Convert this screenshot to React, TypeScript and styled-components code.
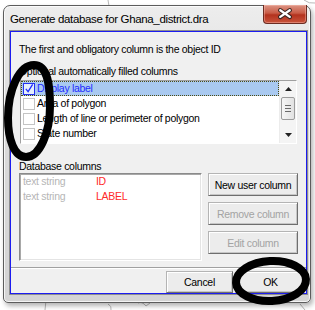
import styled, { createGlobalStyle } from 'styled-components'

const GlobalStyle = createGlobalStyle`
	html, body {
		margin: 0;
		padding: 0;
	}
	body {
		width: 315px;
		height: 310px;
		overflow: hidden;
		background: #fff;
		font-family: 'Liberation Sans', Arial, sans-serif;
		font-size: 10.5px;
		letter-spacing: -0.3px;
		color: #000;
	}
`

const autoColumns = [
	{ label: 'Display label', checked: true },
	{ label: 'Area of polygon', checked: false },
	{ label: 'Length of line or perimeter of polygon', checked: false },
	{ label: 'State number', checked: false },
	{ label: 'Start point', checked: false },
]

const dbColumns = [
	{ type: 'text string', name: 'ID' },
	{ type: 'text string', name: 'LABEL' },
]

export default function App() {
	return (
		<Page>
			<GlobalStyle />
			<MapLines width='315' height='310' viewBox='0 0 315 310'>
				<path d='M108 0 L109 6' />
				<path d='M304 0 Q309 4 315 3' />
				<path d='M46 300 L45 310' />
				<path d='M108 304 Q112 306 111 310' />
				<path d='M138 303 Q142 301 146 306 L150 303' />
				<path d='M300 304 L305 310' />
			</MapLines>
			<Window>
				<TitleBar>
					<Title>Generate database for Ghana_district.dra</Title>
					<CloseButton>
						<svg width='44' height='19' viewBox='0 0 44 19'>
							<path
								d='M17 5 L27 12 M27 5 L17 12'
								stroke='#3b2622'
								strokeWidth='4.6'
								strokeLinecap='round'
							/>
							<path
								d='M17 5 L27 12 M27 5 L17 12'
								stroke='#fff'
								strokeWidth='2.4'
								strokeLinecap='round'
							/>
						</svg>
					</CloseButton>
				</TitleBar>
				<ClientFrame>
					<Client>
						<Intro>The first and obligatory column is the object ID</Intro>
						<SectionLabel>Optional automatically filled columns</SectionLabel>
						<CheckList>
							<CheckRows>
								{autoColumns.map((c, i) => (
									<CheckRow key={c.label} $selected={i === 0}>
										<Box $checked={c.checked}>
											{c.checked && (
												<svg width='11' height='11' viewBox='0 0 11 11'>
													<path
														d='M2 6 L4.5 9 L9.5 1'
														stroke='#1e2cff'
														strokeWidth='1.4'
														fill='none'
													/>
												</svg>
											)}
										</Box>
										<RowText $selected={i === 0}>{c.label}</RowText>
									</CheckRow>
								))}
							</CheckRows>
							<ScrollBar>
								<ScrollArrow>
									<svg width='7' height='4' viewBox='0 0 7 4'>
										<path d='M0 4 L3.5 0 L7 4 Z' fill='#222' />
									</svg>
								</ScrollArrow>
								<ScrollThumb>
									<Grip />
									<Grip />
									<Grip />
								</ScrollThumb>
								<ScrollSpacer />
								<ScrollArrow>
									<svg width='7' height='4' viewBox='0 0 7 4'>
										<path d='M0 0 L7 0 L3.5 4 Z' fill='#222' />
									</svg>
								</ScrollArrow>
							</ScrollBar>
						</CheckList>
						<DbLabel>Database columns</DbLabel>
						<ColumnsArea>
							<ColumnList>
								{dbColumns.map((c) => (
									<ColumnRow key={c.name}>
										<ColumnType>{c.type}</ColumnType>
										<ColumnName>{c.name}</ColumnName>
									</ColumnRow>
								))}
							</ColumnList>
							<ButtonStack>
								<Button>New user column</Button>
								<Button disabled>Remove column</Button>
								<Button disabled>Edit column</Button>
							</ButtonStack>
						</ColumnsArea>
						<Separator />
						<Footer>
							<Button $wide>Cancel</Button>
							<Button $wide>OK</Button>
						</Footer>
					</Client>
				</ClientFrame>
			</Window>
			<Marks width='315' height='310' viewBox='0 0 315 310'>
				{/* hand-drawn marks over the screenshot */}
				<path d='M34 65 C48 65 50 86 50 106 C50 132 40 157 26 157 C14 157 8 139 8 118 C8 90 19 65 34 65 Z' />
				<ellipse cx='271' cy='281' rx='35' ry='20' transform='rotate(-3 271 281)' />
			</Marks>
		</Page>
	)
}

const Page = styled.div`
	position: relative;
	width: 315px;
	height: 310px;
	box-sizing: border-box;
	padding: 5px 0 0 3px;
`

const MapLines = styled.svg`
	position: absolute;
	left: 0;
	top: 0;
	fill: none;
	stroke: #b8b8b8;
	stroke-width: 1;
`

const Marks = styled.svg`
	position: absolute;
	left: 0;
	top: 0;
	pointer-events: none;
	fill: none;
	stroke: #000;
	stroke-width: 8;
`

const Window = styled.section`
	position: relative;
	width: 308px;
	height: 298px;
	box-sizing: border-box;
	display: flex;
	flex-direction: column;
	padding: 0 2px 7px 5px;
	border: 1px solid #5c5c5c;
	border-radius: 7px 7px 5px 5px;
	background: linear-gradient(#ededed, #dadada 40%, #d4d4d4);
	box-shadow: inset 0 0 0 1px rgba(255, 255, 255, 0.75), 2px 3px 5px rgba(0, 0, 0, 0.3);
`

const TitleBar = styled.div`
	height: 24px;
	display: flex;
	justify-content: space-between;
	align-items: flex-start;
`

const Title = styled.span`
	padding: 6px 0 0 1px;
	font-size: 11.5px;
	letter-spacing: -0.35px;
	line-height: 14px;
`

const CloseButton = styled.div`
	width: 44px;
	height: 19px;
	margin: -1px 1px 0 0;
	box-sizing: border-box;
	border: 1px solid #6b2c22;
	border-top: none;
	border-radius: 0 0 4px 4px;
	background: linear-gradient(#dc9585, #c85b46 45%, #b3321e 55%, #c9543c);
	box-shadow: inset 0 0 0 1px rgba(255, 200, 190, 0.4);
	display: flex;
`

const ClientFrame = styled.div`
	flex: 1;
	display: flex;
	border: 1px solid #8e8e8e;
`

const Client = styled.div`
	flex: 1;
	display: flex;
	flex-direction: column;
	border: 1px solid #1c1cf0;
	background: #f0f0f0;
`

const Intro = styled.div`
	padding: 10px 0 0 8px;
	line-height: 14px;
`

const SectionLabel = styled.div`
	margin-top: 8px;
	padding-left: 8px;
	line-height: 14px;
`

const CheckList = styled.div`
	margin: 2px 0 0 9px;
	width: 277px;
	height: 64px;
	box-sizing: border-box;
	display: flex;
	background: #fff;
	border: 1px solid;
	border-color: #a0a0a0 #fff #fff #a0a0a0;
	overflow: hidden;
`

const CheckRows = styled.div`
	flex: 1;
	display: flex;
	flex-direction: column;
`

const CheckRow = styled.div<{ $selected?: boolean }>`
	height: 15px;
	flex: none;
	box-sizing: border-box;
	display: flex;
	align-items: center;
	gap: 2px;
	padding-left: 1px;
	background: ${(p) => (p.$selected ? '#a9c9f0' : 'transparent')};
	border: 1px dotted ${(p) => (p.$selected ? '#4b4a12' : 'transparent')};
`

const Box = styled.span<{ $checked?: boolean }>`
	width: 12px;
	height: 12px;
	box-sizing: border-box;
	display: flex;
	align-items: center;
	justify-content: center;
	border: 1px solid ${(p) => (p.$checked ? '#2430f0' : '#c4c4c4')};
	background: ${(p) => (p.$checked ? '#e4eefc' : '#fff')};
`

const RowText = styled.span<{ $selected?: boolean }>`
	line-height: 13px;
	color: ${(p) => (p.$selected ? '#1e2cff' : '#000')};
	white-space: nowrap;
`

const ScrollBar = styled.div`
	width: 16px;
	display: flex;
	flex-direction: column;
	align-items: center;
	background: #f4f4f4;
	border-left: 1px solid #ececec;
`

const ScrollArrow = styled.div`
	height: 16px;
	flex: none;
	display: flex;
	align-items: center;
	justify-content: center;
`

const ScrollThumb = styled.div`
	width: 14px;
	height: 23px;
	flex: none;
	box-sizing: border-box;
	border: 1px solid #9c9c9c;
	border-radius: 2px;
	background: linear-gradient(90deg, #f6f6f6, #e2e2e2);
	display: flex;
	flex-direction: column;
	align-items: center;
	justify-content: center;
	gap: 2px;
`

const Grip = styled.span`
	width: 6px;
	height: 1px;
	background: #6a6a6a;
`

const ScrollSpacer = styled.div`
	flex: 1;
`

const DbLabel = styled.div`
	margin-top: 15px;
	padding-left: 8px;
	line-height: 14px;
`

const ColumnsArea = styled.div`
	display: flex;
	gap: 6px;
	padding-left: 8px;
`

const ColumnList = styled.div`
	width: 183px;
	height: 88px;
	box-sizing: border-box;
	padding: 0 0 0 3px;
	background: #fff;
	border: 1px solid;
	border-color: #8a8a8a #fff #fff #8a8a8a;
	box-shadow: inset 1px 1px 0 #a8a8a8, inset -1px -1px 0 #e4e4e4;
`

const ColumnRow = styled.div`
	height: 15px;
	line-height: 15px;
	display: flex;
`

const ColumnType = styled.span`
	width: 73px;
	color: #b6b6b6;
`

const ColumnName = styled.span`
	color: #ff2b2b;
`

const ButtonStack = styled.div`
	display: flex;
	flex-direction: column;
	gap: 6px;
`

const Button = styled.button<{ $wide?: boolean }>`
	width: ${(p) => (p.$wide ? '67px' : '90px')};
	height: ${(p) => (p.$wide ? '22px' : '23px')};
	padding: 0;
	box-sizing: border-box;
	font-family: inherit;
	font-size: 10.5px;
	letter-spacing: -0.3px;
	color: #000;
	background: #ececec;
	border: 1px solid;
	border-color: #b4b4b4 #6e6e6e #6e6e6e #b4b4b4;
	box-shadow: inset 1px 1px 0 #fff, inset -1px -1px 0 #c6c6c6;

	&:disabled {
		color: #a3a3a3;
	}
`

const Separator = styled.div`
	margin-top: 6px;
	height: 1px;
	background: #a0a0a0;
	border-bottom: 1px solid #fff;
`

const Footer = styled.div`
	display: flex;
	justify-content: flex-end;
	gap: 4px;
	margin-top: 2px;
	padding-right: 2px;
`
